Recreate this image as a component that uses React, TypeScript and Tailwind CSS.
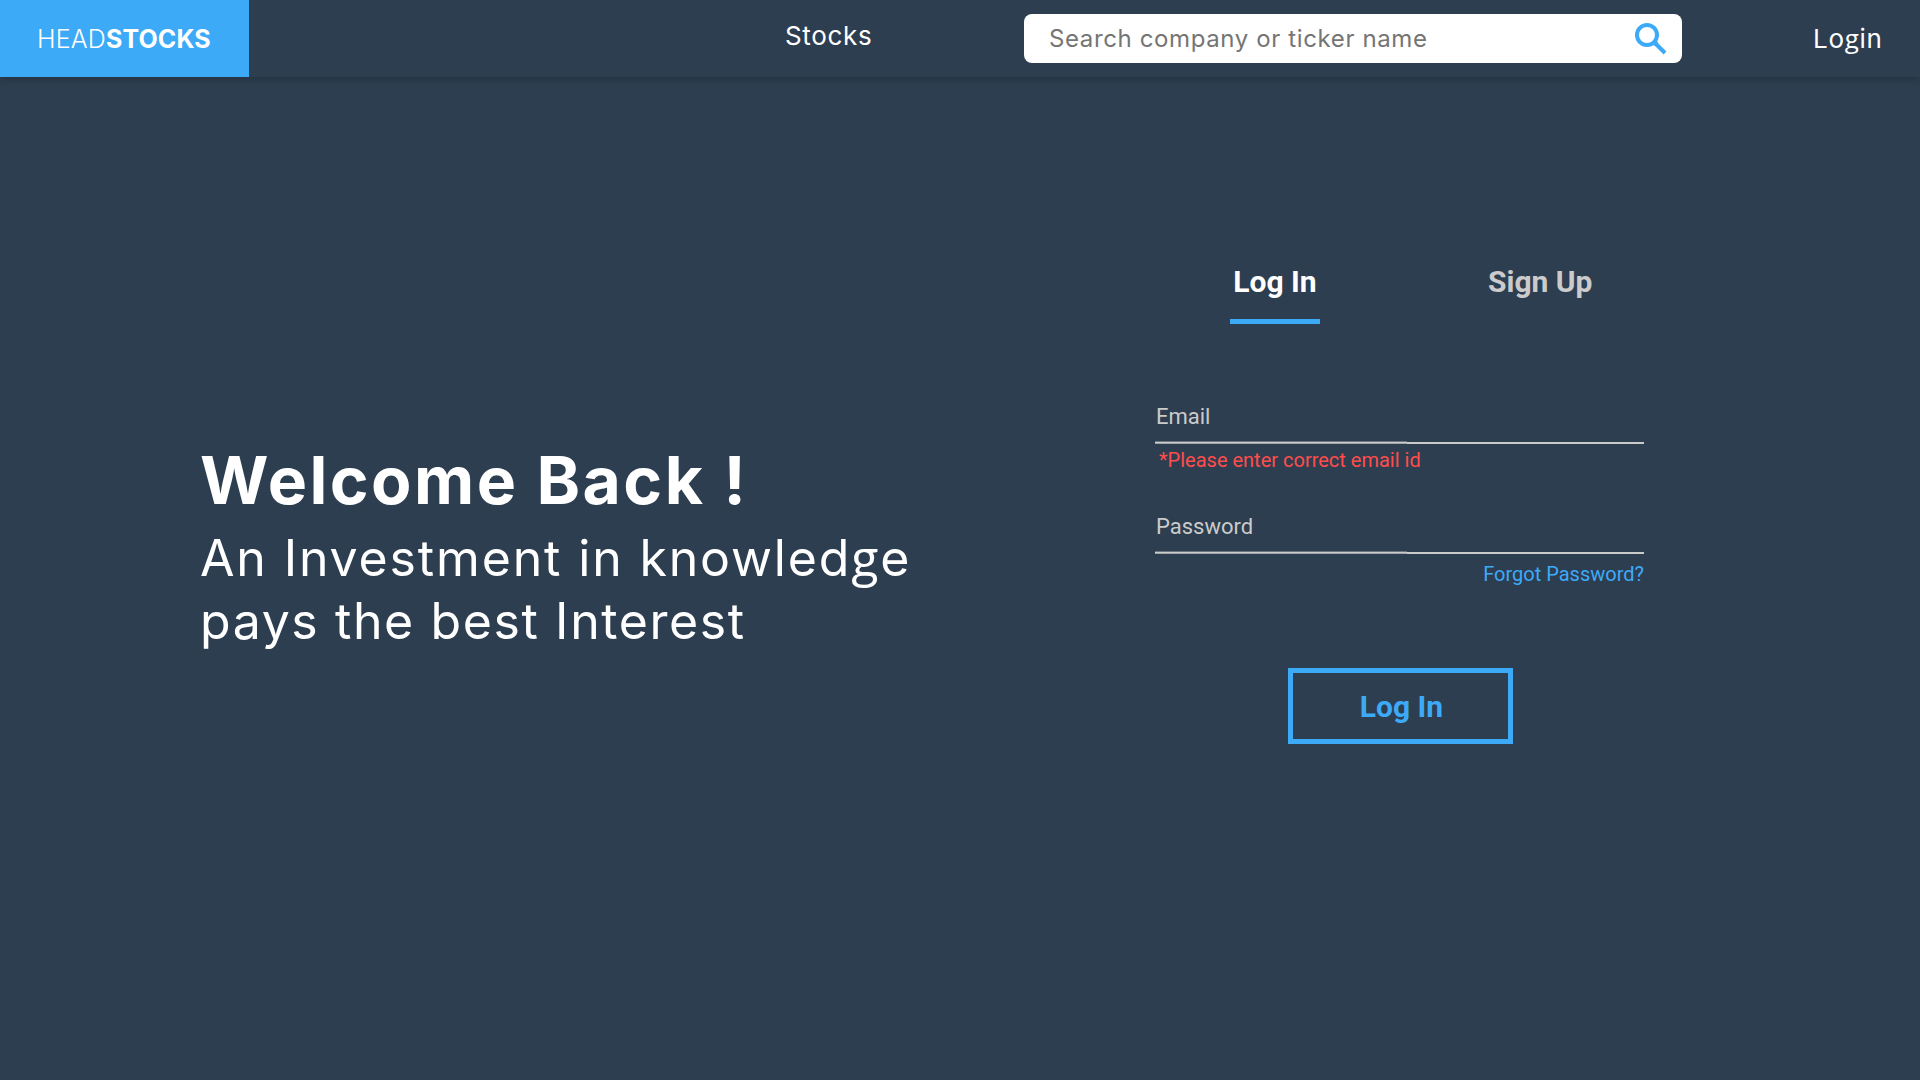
import React from "react";

const G = () => <span className="font-['Open_Sans',sans-serif]">g</span>;

function SearchIcon() {
  return (
    <svg viewBox="0 0 32 32" className="mt-px h-8 w-8 text-[#3daaf8]" fill="none" stroke="currentColor">
      <circle cx="12" cy="12" r="10" strokeWidth="4" />
      <path d="M19 19l11 11" strokeWidth="4" />
      <path d="M18.6 18.6l3 3" strokeWidth="5" />
    </svg>
  );
}

function Header() {
  return (
    <header className="flex h-[77px] w-full shrink-0 bg-[#2d3e50] text-[26px] leading-[30px] text-white shadow-[0_3px_6px_rgba(0,0,0,0.16)]">
      <div className="flex w-[249px] items-center bg-[#3daaf8] pl-[37px]">
        <div className="pt-px text-[25px]">
          <span className="font-light tracking-[0.2px]">HEAD</span>
          <span className="font-bold tracking-[0.1px]">STOCKS</span>
        </div>
      </div>
      <nav className="flex w-[775px] pt-[21px] pl-[536px] tracking-[0.68px]">
        <a>Stocks</a>
      </nav>
      <div className="mt-[14px] flex h-[49px] w-[658px] items-center justify-between rounded-[8px] bg-white pr-[15px] pl-[25px]">
        <input
          className="w-[480px] bg-transparent text-[24px] tracking-[0.62px] outline-none placeholder:text-[#757575]"
          placeholder="Search company or ticker name"
        />
        <SearchIcon />
      </div>
      <a className="mt-[23px] ml-[131px] tracking-[0.7px]">
        Lo<G />in
      </a>
    </header>
  );
}

function Field({ label }: { label: string }) {
  return (
    <div className="relative h-[40px] w-[489px] border-b-2 border-[#cbcbcb] text-[22px] leading-[26px] text-[#cbcbcb]">
      <span className="pl-px">{label}</span>
      <div className="absolute -bottom-[2px] left-0 h-[3px] w-[252px] border-t border-b border-t-[#6b7682] border-b-[#a0a5aa]" />
    </div>
  );
}

export default function App() {
  return (
    <div className="flex h-[1080px] w-full flex-col overflow-hidden bg-[#2d3e50] font-['Inter',sans-serif] text-white">
      <Header />
      <main className="flex">
        <section className="w-[1155px] pt-[363px] pl-[200px]">
          <h1 className="text-[66px] leading-[80px] font-bold tracking-[2.45px]">Welcome Back !</h1>
          <p className="mt-[5px] text-[50px] leading-[64px] whitespace-nowrap">
            <span className="block h-[64px] tracking-[1.85px]">
              An Investment in knowled<G />e
            </span>
            <span className="block h-[64px] tracking-[1.6px]">pays the best Interest</span>
          </p>
        </section>
        <section className="w-[489px] pt-[187px] font-['Roboto',sans-serif]">
          <div className="flex text-[30px] leading-[36px] font-bold">
            <div className="ml-[75px] flex h-[60px] w-[90px] justify-center border-b-[5px] border-[#3daaf8] whitespace-nowrap">
              Log In
            </div>
            <div className="ml-[168px] whitespace-nowrap text-[#cbcbcb]">Sign Up</div>
          </div>
          <div className="mt-[80px]">
            <Field label="Email" />
            <div className="h-[70px] pt-[4px] pl-[4px] text-[20px] leading-[24px] text-[#ff4d4d]">
              *Please enter correct email id
            </div>
            <Field label="Password" />
            <div className="pt-[8px] text-right text-[20px] leading-[24px] text-[#3daaf8]">Forgot Password?</div>
          </div>
          <button className="mt-[82px] ml-[133px] block h-[76px] w-[225px] border-[5px] border-[#3daaf8] pt-[2px] pl-[2px] text-[30px] leading-[36px] font-bold text-[#3daaf8]">
            Log In
          </button>
        </section>
      </main>
    </div>
  );
}
